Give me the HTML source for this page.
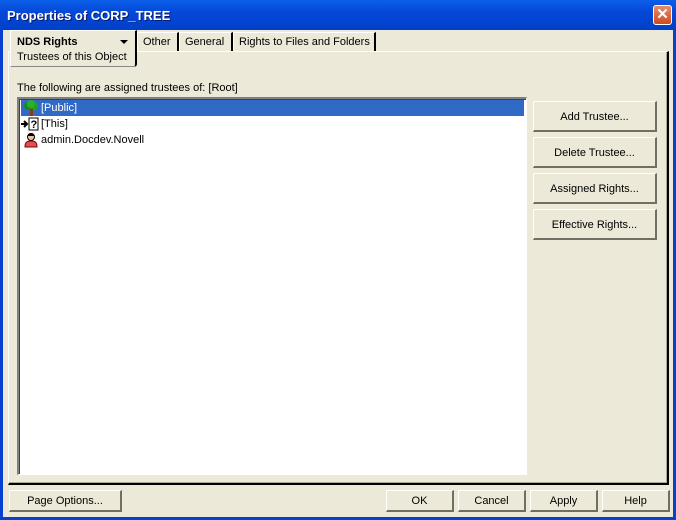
<!DOCTYPE html>
<html><head><style>
*{margin:0;padding:0;box-sizing:border-box}
body{width:676px;height:520px;background:#0841d0;font-family:"Liberation Sans",sans-serif;font-size:11px;color:#000;position:relative;overflow:hidden}
.a{position:absolute;white-space:nowrap}
.title{left:0;top:0;width:676px;height:30px;background:linear-gradient(#0a5fe8,#0548d8 40%,#0040c8);}
.tt{left:7px;top:8px;color:#fff;font-weight:bold;font-size:13px;text-shadow:1px 1px #0a1a70}
.close{left:653px;top:5px;width:19px;height:20px;background:linear-gradient(#e88a6a,#d04a20);border:1px solid #fff;border-radius:3px;color:#fff;font-weight:bold;font-size:15px;text-align:center;line-height:17px}
.client{left:3px;top:30px;width:670px;height:487px;background:#ece9d8}
.panel{left:8px;top:51px;width:661px;height:434px;border-top:1px solid #fff;border-left:1px solid #fff;border-right:2px solid #000;border-bottom:2px solid #000;box-shadow:inset -1px -1px #aca899}
.tab{top:32px;height:19px;border-top:1px solid #fff;border-left:1px solid #fff;border-right:2px solid #000;padding:3px 5px 0 5px;background:#ece9d8}
.act{left:10px;top:30px;width:127px;height:37px;border-top:1px solid #fff;border-left:1px solid #fff;border-right:2px solid #000;border-bottom:1px solid #888;background:#ece9d8;border-bottom-right-radius:3px}
.list{left:17px;top:97px;width:510px;height:378px;background:#fff;border-top:2px solid #808080;border-left:2px solid #808080;border-right:1px solid #fff;border-bottom:1px solid #fff;box-shadow:inset 1px 1px #404040}
.btn{position:absolute;background:#ece9d8;border-top:1px solid #fff;border-left:1px solid #fff;border-right:2px solid #716f64;border-bottom:2px solid #716f64;text-align:center;white-space:nowrap}
.row{position:absolute;left:2px;height:16px;line-height:17px;padding-left:20px;width:503px}
</style></head><body>
<div class="a title"></div>
<div class="a tt">Properties of CORP_TREE</div>
<div class="a close">✕</div>
<div class="a client"></div>
<div class="a panel"></div>
<div class="a tab" style="left:137px;width:42px">Other</div>
<div class="a tab" style="left:179px;width:54px">General</div>
<div class="a tab" style="left:233px;width:143px">Rights to Files and Folders</div>
<div class="a act">
 <div class="a" style="left:6px;top:5px;font-weight:bold">NDS Rights</div>
 <div class="a" style="left:109px;top:9px;width:0;height:0;border-left:4px solid transparent;border-right:4px solid transparent;border-top:4px solid #000"></div>
 <div class="a" style="left:6px;top:20px">Trustees of this Object</div>
</div>
<div class="a" style="left:17px;top:82px">The following are assigned trustees of: [Root]</div>
<div class="a list">
 <div class="row" style="top:1px;background:#316ac5;color:#fff">[Public]
  <svg class="a" style="left:2px;top:0" width="16" height="16"><circle cx="5" cy="6" r="4" fill="#1a8a1a"/><circle cx="11" cy="6" r="4" fill="#22a022"/><circle cx="8" cy="4" r="4" fill="#2cb02c"/><rect x="7" y="9" width="3" height="7" fill="#8b3a10"/></svg></div>
 <div class="row" style="top:17px">[This]
  <svg class="a" style="left:0;top:0" width="18" height="16"><path d="M0 8h5M3 5l3 3-3 3" stroke="#000" stroke-width="2" fill="none"/><rect x="8" y="2" width="9" height="12" fill="#fff" stroke="#000"/><text x="9.5" y="12" font-size="11" font-weight="bold" font-family="Liberation Sans">?</text></svg></div>
 <div class="row" style="top:33px">admin.Docdev.Novell
  <svg class="a" style="left:2px;top:0" width="16" height="16"><circle cx="8" cy="5" r="3.5" fill="#f0c0a0" stroke="#000"/><path d="M4.5 4a3.5 3 0 0 1 7 0z" fill="#000"/><path d="M2 15c0-5 2-6 6-6s6 1 6 6z" fill="#e05050" stroke="#800"/></svg></div>
</div>
<div class="btn" style="left:533px;top:101px;width:124px;height:31px;line-height:30px">Add Trustee...</div>
<div class="btn" style="left:533px;top:137px;width:124px;height:31px;line-height:30px">Delete Trustee...</div>
<div class="btn" style="left:533px;top:173px;width:124px;height:31px;line-height:30px">Assigned Rights...</div>
<div class="btn" style="left:533px;top:209px;width:124px;height:31px;line-height:30px">Effective Rights...</div>
<div class="btn" style="left:9px;top:490px;width:113px;height:22px;line-height:21px">Page Options...</div>
<div class="btn" style="left:386px;top:490px;width:68px;height:22px;line-height:21px">OK</div>
<div class="btn" style="left:458px;top:490px;width:68px;height:22px;line-height:21px">Cancel</div>
<div class="btn" style="left:530px;top:490px;width:68px;height:22px;line-height:21px">Apply</div>
<div class="btn" style="left:602px;top:490px;width:68px;height:22px;line-height:21px">Help</div>
</body></html>
